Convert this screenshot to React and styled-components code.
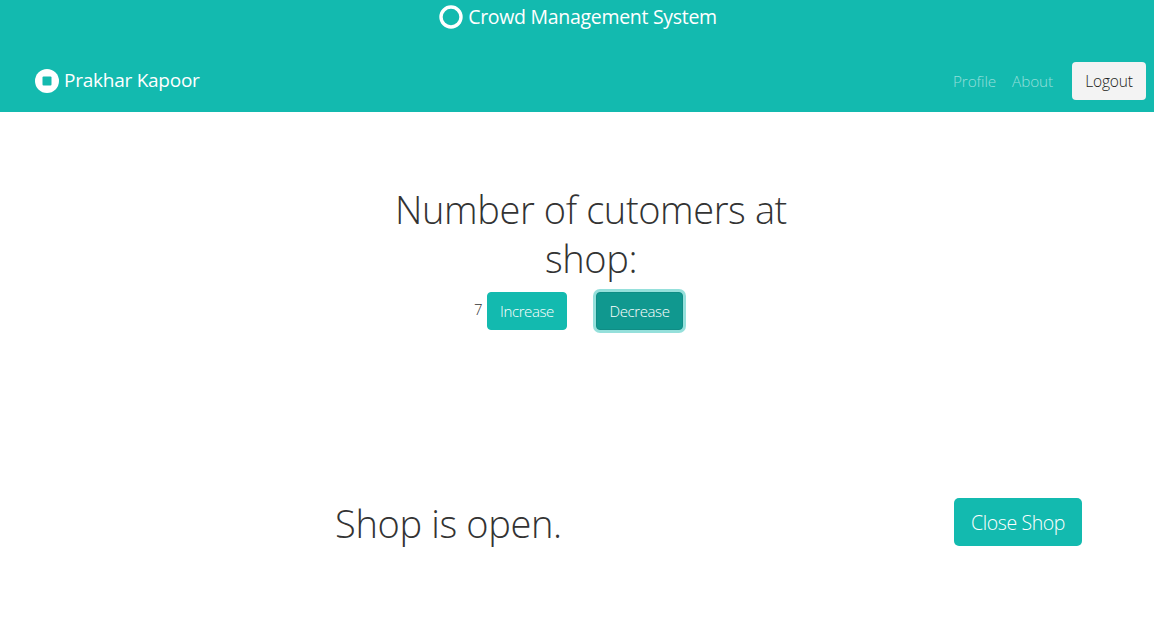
import React from "react";
import styled, { createGlobalStyle } from "styled-components";

const GlobalStyle = createGlobalStyle`
  body {
    margin: 0;
    background: #fff;
    color: #333;
    font-family: "Open Sans", "Noto Sans", sans-serif;
    font-weight: 300;
  }
`;

const Header = styled.header`
  background: #13baaf;
  height: 112px;
  display: flex;
  flex-direction: column;
`;

const TopTitle = styled.div`
  height: 34px;
  padding-left: 2px;
  display: flex;
  align-items: center;
  justify-content: center;
  gap: 5px;
  color: #fff;
  font-size: 19.5px;
  font-weight: 400;
  letter-spacing: -0.3px;
`;

const Navbar = styled.nav`
  flex: 1;
  display: flex;
  align-items: center;
  justify-content: space-between;
  padding: 16px 8px 0 35px;
`;

const Brand = styled.div`
  display: flex;
  align-items: center;
  gap: 5px;
  color: #fff;
  font-size: 19px;
  font-weight: 400;
  letter-spacing: -0.25px;
`;

const LabelText = styled.span`
  padding-bottom: 2px;
`;

const NavLinks = styled.div`
  display: flex;
  align-items: center;
`;

const NavLink = styled.a`
  color: rgba(255, 255, 255, 0.55);
  font-size: 15.3px;
  letter-spacing: -0.1px;
  margin-right: ${(p) => p.$gap}px;
`;

const LogoutButton = styled.button`
  width: 74px;
  height: 38px;
  border: 0;
  border-radius: 4px;
  background: #f3f3f3;
  color: #1a1d20;
  font: 300 15.5px "Open Sans", sans-serif;
  letter-spacing: -0.2px;
`;

const Main = styled.main`
  display: flex;
  flex-direction: column;
`;

const CounterBlock = styled.section`
  width: 400px;
  margin: 73px 0 0 391px;
  text-align: center;
`;

const Heading = styled.h1`
  margin: 0;
  font-size: 38px;
  line-height: 49px;
  font-weight: 300;
  letter-spacing: -0.4px;
`;

const CounterRow = styled.div`
  display: flex;
  justify-content: center;
  margin-top: 9px;
  padding-right: 25px;
`;

const Count = styled.span`
  font-size: 15px;
  line-height: 16px;
  margin-top: 9px;
  margin-right: 5px;
  width: 8px;
`;

const Button = styled.button`
  height: 38px;
  width: ${(p) => p.$width}px;
  margin-right: ${(p) => p.$gap || 0}px;
  padding: 0;
  border: 1px solid ${(p) => (p.$active ? "#0f8d85" : "#13baaf")};
  border-radius: 4px;
  background: ${(p) => (p.$active ? "#10988f" : "#13baaf")};
  box-shadow: ${(p) => (p.$active ? "0 0 0 3px rgba(20, 187, 176, 0.45)" : "none")};
  color: #fff;
  font: 300 15px "Open Sans", sans-serif;
  letter-spacing: -0.4px;
`;

const ShopRow = styled.section`
  display: flex;
  align-items: flex-start;
  justify-content: space-between;
  margin: 168px 72px 0 335px;
`;

const ShopStatus = styled.h2`
  margin: 1px 0 0;
  font-size: 38px;
  line-height: 48px;
  font-weight: 300;
  letter-spacing: -0.35px;
`;

const CloseButton = styled.button`
  width: 128px;
  height: 48px;
  padding: 0;
  border: 0;
  border-radius: 5px;
  background: #13baaf;
  color: #fff;
  font: 300 19.5px "Open Sans", sans-serif;
  letter-spacing: -0.4px;
`;

const RingIcon = () => (
  <svg width="24" height="24" viewBox="0 0 24 24">
    <circle cx="12" cy="12" r="10" fill="none" stroke="#fff" strokeWidth="3.4" />
  </svg>
);

const StopIcon = () => (
  <svg width="24" height="24" viewBox="0 0 24 24">
    <circle cx="12" cy="12" r="12" fill="#fff" />
    <rect x="7.5" y="7.5" width="9" height="9" rx="1" fill="#13baaf" />
  </svg>
);

const App = () => {
  return (
    <>
      <GlobalStyle />
      <Header>
        <TopTitle>
          <RingIcon />
          <LabelText>Crowd Management System</LabelText>
        </TopTitle>
        <Navbar>
          <Brand>
            <StopIcon />
            <LabelText>Prakhar Kapoor</LabelText>
          </Brand>
          <NavLinks>
            <NavLink $gap={16}>Profile</NavLink>
            <NavLink $gap={19}>About</NavLink>
            <LogoutButton>Logout</LogoutButton>
          </NavLinks>
        </Navbar>
      </Header>
      <Main>
        <CounterBlock>
          <Heading>Number of cutomers at shop:</Heading>
          <CounterRow>
            <Count>7</Count>
            <Button $width={80} $gap={29}>Increase</Button>
            <Button $width={87} $active>Decrease</Button>
          </CounterRow>
        </CounterBlock>
        <ShopRow>
          <ShopStatus>Shop is open.</ShopStatus>
          <CloseButton>Close Shop</CloseButton>
        </ShopRow>
      </Main>
    </>
  );
};

export default App;
